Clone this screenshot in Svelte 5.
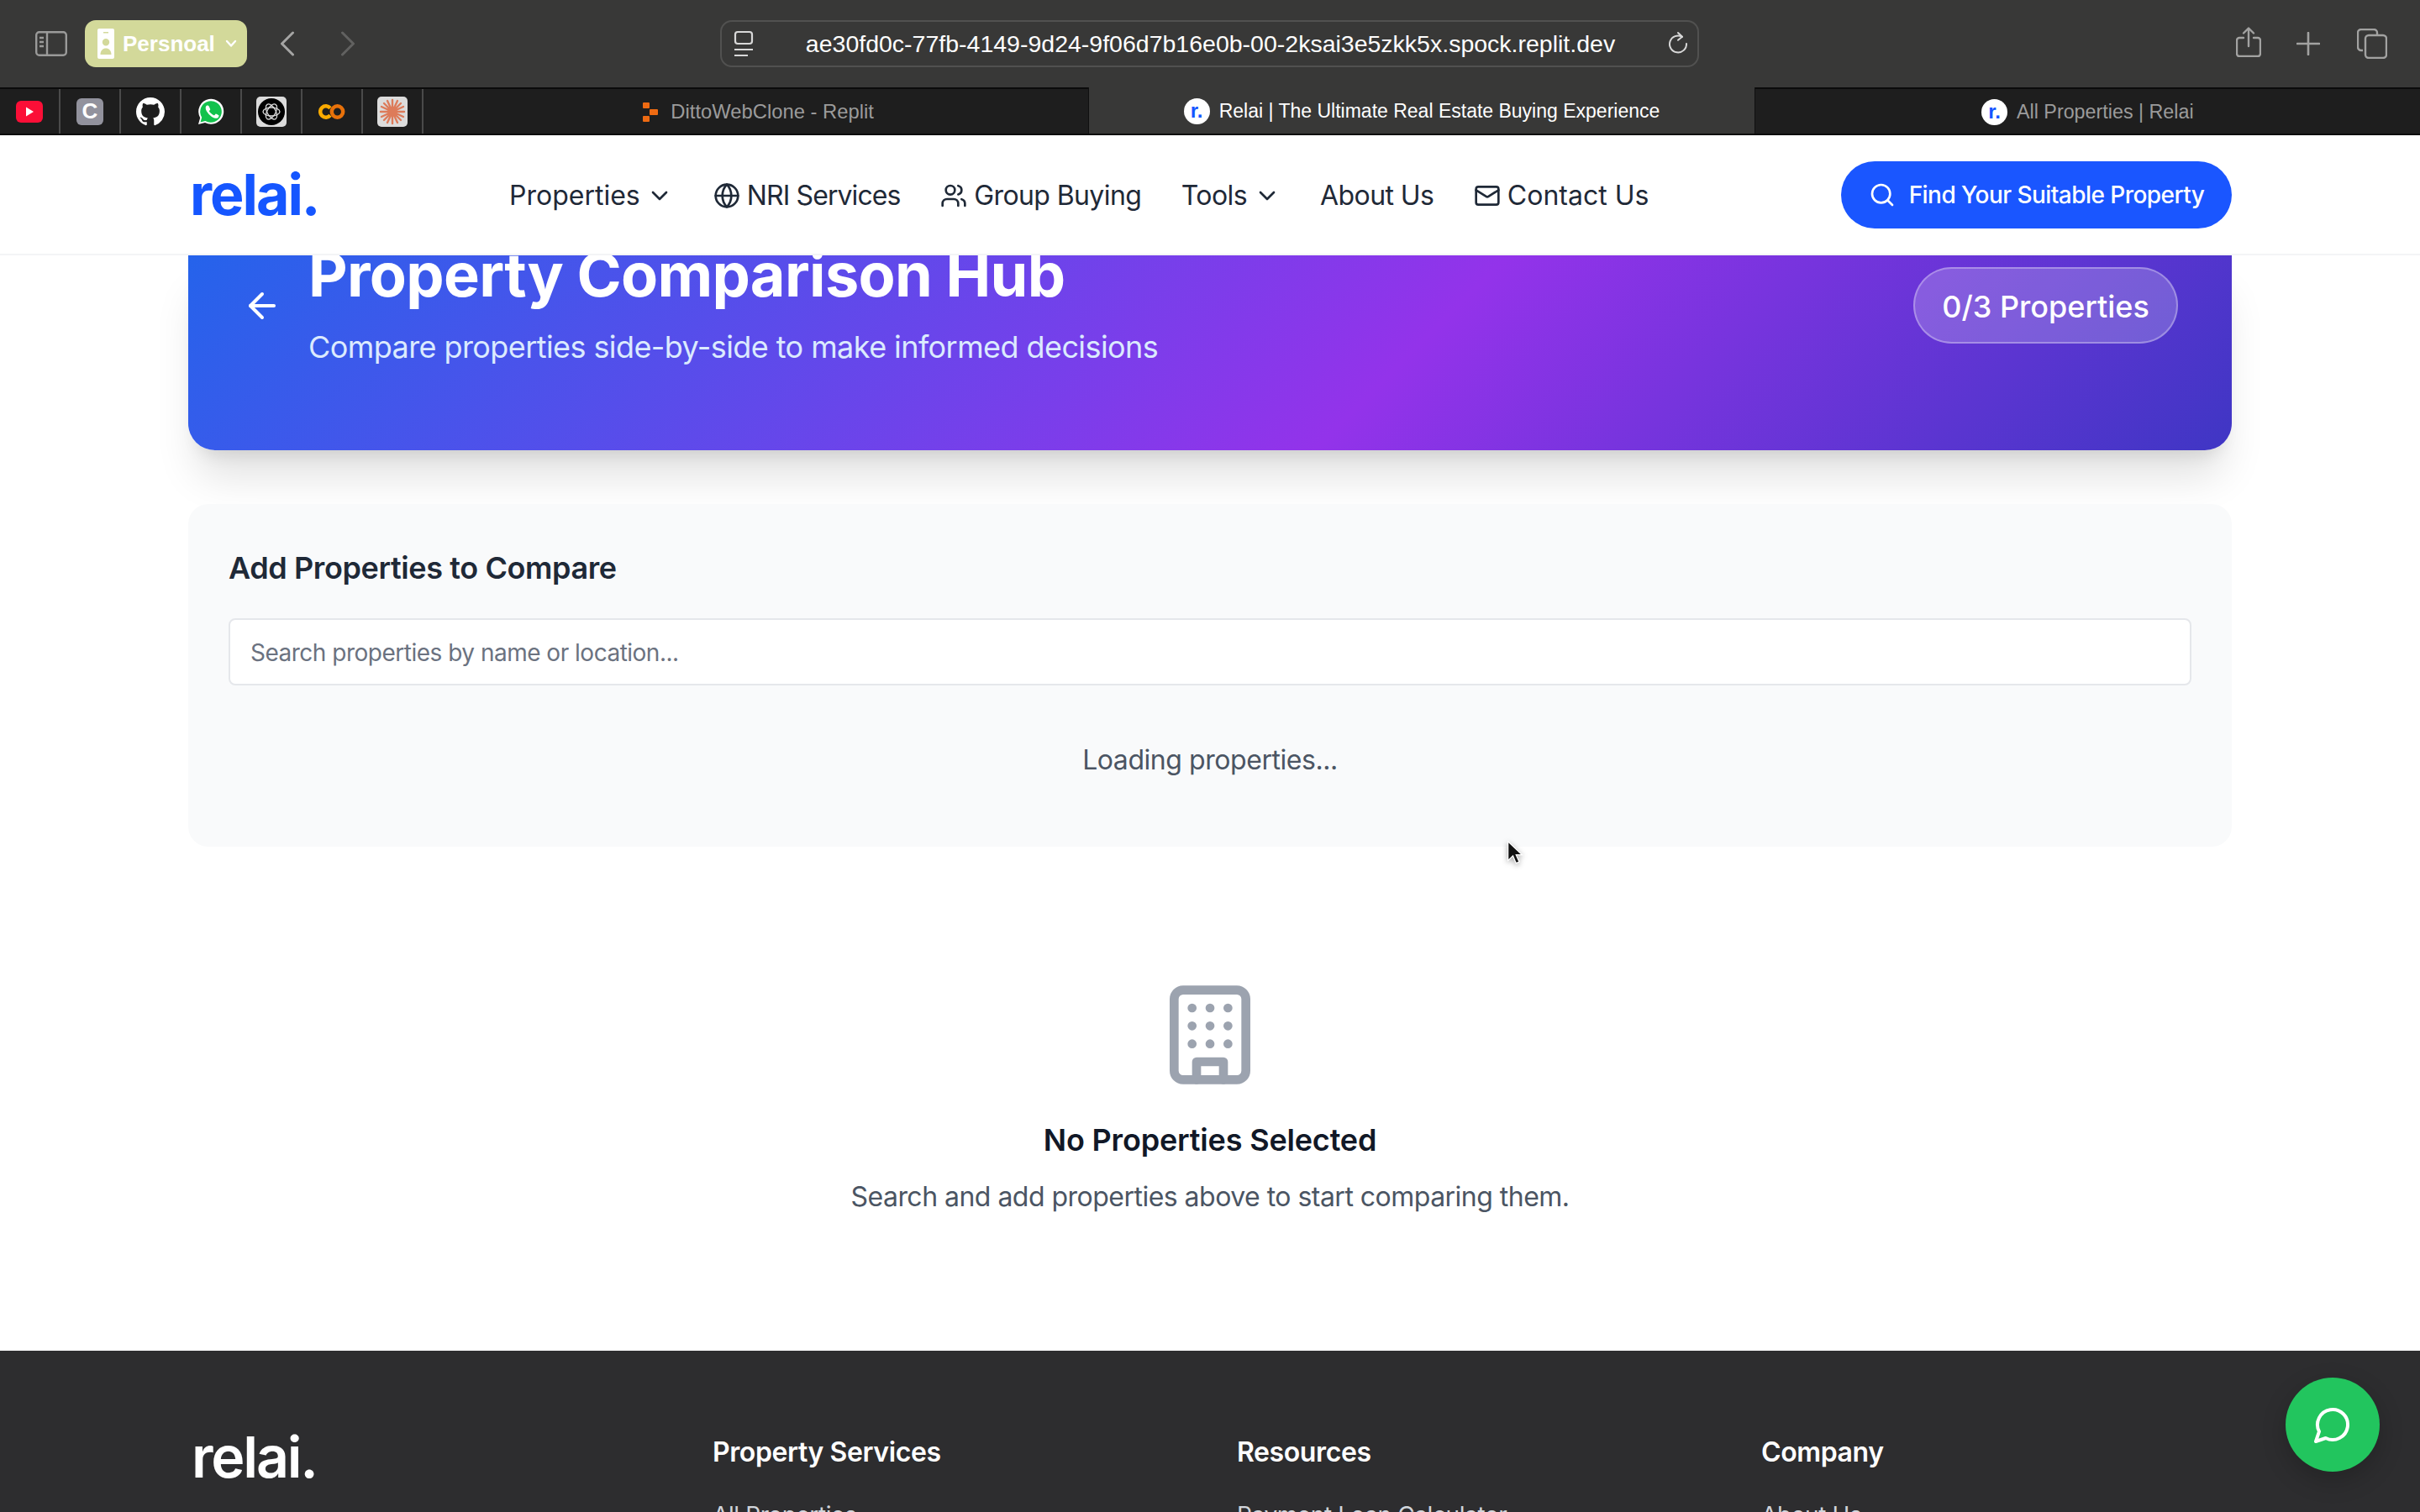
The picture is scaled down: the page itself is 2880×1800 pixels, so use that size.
<script>
  const dots = [6, 10, 14];
  const pins = [
    { id: 'yt' }, { id: 'c' }, { id: 'gh' }, { id: 'wa' }, { id: 'ai' }, { id: 'co' }, { id: 'cl' }
  ];
  const footerCols = [
    { title: 'Property Services', link: 'All Properties' },
    { title: 'Resources', link: 'Payment Loan Calculator' },
    { title: 'Company', link: 'About Us' }
  ];
</script>

<div class="screen">
  <header class="chrome">
    <div class="toolbar">
      <div class="left-tools">
        <svg class="sidebar-ic" viewBox="0 0 38 30" fill="none" stroke="#9a9a99" stroke-width="2.4">
          <rect x="1.2" y="1.2" width="35.6" height="27.6" rx="3.5" />
          <path d="M14 1.2v27.6M5 8h5M5 13h5M5 18h5" />
        </svg>
        <div class="profile">
          <svg class="badge-ic" viewBox="0 0 20 36">
            <path fill="#fff" fill-rule="evenodd" d="M2 0h16a2 2 0 0 1 2 2v32a2 2 0 0 1-2 2H2a2 2 0 0 1-2-2V2a2 2 0 0 1 2-2zM7 4v1.600h6V4zM10 12a4.200 4.200 0 1 0 0 8.400a4.200 4.200 0 0 0 0-8.400zM3.500 31h13c0-5-3-7.500-6.500-7.500s-6.500 2.500-6.500 7.500z" />
          </svg>
          <span class="profile-name">Persnoal</span>
          <svg class="profile-chev" viewBox="0 0 14 10" fill="none" stroke="#fff" stroke-width="2.400" stroke-linecap="round" stroke-linejoin="round"><path d="M2 2l5 5.500 5-5.500" /></svg>
        </div>
        <div class="history">
          <svg viewBox="0 0 18 30" fill="none" stroke="#a5a5a4" stroke-width="3" stroke-linecap="round" stroke-linejoin="round"><path d="M15.500 2L2.500 15l13 13" /></svg>
          <svg viewBox="0 0 18 30" fill="none" stroke="#616160" stroke-width="3" stroke-linecap="round" stroke-linejoin="round"><path d="M2.500 2l13 13-13 13" /></svg>
        </div>
      </div>
      <div class="url">
        <svg class="url-ic" viewBox="0 0 24 32" fill="none" stroke="#d8d8d8" stroke-width="2.200">
          <rect x="2" y="2" width="20" height="14" rx="3" />
          <path d="M1 23h22M1 30h16" />
        </svg>
        <span class="url-text">ae30fd0c-77fb-4149-9d24-9f06d7b16e0b-00-2ksai3e5zkk5x.spock.replit.dev</span>
        <svg class="reload" viewBox="0 0 26 30" fill="none" stroke="#d8d8d8" stroke-width="2" stroke-linecap="round" stroke-linejoin="round">
          <path d="M18 6.800A10 10 0 1 0 23 15" /><path d="M13 2l5 4.800-5 4" />
        </svg>
      </div>
      <div class="right-tools">
        <svg class="share" viewBox="0 0 30 36" fill="none" stroke="#a2a2a1" stroke-width="2.400" stroke-linecap="round" stroke-linejoin="round">
          <path d="M9 13H4a3 3 0 0 0-3 3v16a3 3 0 0 0 3 3h22a3 3 0 0 0 3-3V16a3 3 0 0 0-3-3h-5M15 23V2M9 7.500L15 1.500l6 6" />
        </svg>
        <svg class="plus" viewBox="0 0 28 28" fill="none" stroke="#a2a2a1" stroke-width="2.600" stroke-linecap="round"><path d="M14 1v26M1 14h26" /></svg>
        <svg class="copies" viewBox="0 0 36 36" fill="none" stroke="#a2a2a1" stroke-width="2.400">
          <path d="M7 26H5a4 4 0 0 1-4-4V5a4 4 0 0 1 4-4h15a4 4 0 0 1 4 4v2" />
          <rect x="10" y="8" width="25" height="27" rx="4" />
        </svg>
      </div>
    </div>
    <div class="tabbar">
      <div class="pins">
        {#each pins as p}
          <div class="pin">
            {#if p.id === 'yt'}
              <svg width="32" height="26" viewBox="0 0 32 26"><rect width="32" height="26" rx="6" fill="#fb0f37" /><path d="M12 7.500l9 5.500-9 5.500z" fill="#fff" /></svg>
            {:else if p.id === 'c'}
              <div class="pin-c">C</div>
            {:else if p.id === 'gh'}
              <svg width="34" height="34" viewBox="0 0 16 16"><path fill="#fff" d="M8 0C3.580 0 0 3.580 0 8c0 3.540 2.290 6.530 5.470 7.590.4.070.55-.17.55-.38 0-.19-.01-.82-.01-1.490-2.010.37-2.530-.49-2.690-.94-.09-.23-.48-.94-.82-1.130-.28-.15-.68-.52-.01-.53.63-.01 1.080.58 1.230.82.720 1.210 1.870.870 2.330.660.070-.520.280-.870.510-1.070-1.780-.2-3.640-.89-3.640-3.950 0-.870.310-1.590.820-2.150-.08-.2-.36-1.020.080-2.120 0 0 .670-.210 2.200.820.640-.180 1.320-.270 2-.270s1.360.090 2 .270c1.530-1.040 2.200-.820 2.200-.820.440 1.100.160 1.920.080 2.120.510.560.820 1.270.820 2.150 0 3.070-1.870 3.750-3.650 3.950.290.250.540.730.540 1.480 0 1.070-.010 1.930-.010 2.200 0 .210.150.460.550.380A8.010 8.010 0 0 0 16 8c0-4.420-3.580-8-8-8z" /></svg>
            {:else if p.id === 'wa'}
              <svg width="32" height="32" viewBox="0 0 32 32"><path fill="#fff" d="M1 31l2.200-7.800A15 15 0 1 1 9 28.900z" /><path fill="#12c24c" d="M3.500 28.500l1.700-5.700a12.800 12.800 0 1 1 4.200 4.100z" /><path fill="#fff" d="M11.500 8.500c-.6 0-1.800.9-1.800 3 0 2.400 1.700 4.800 2 5.100.3.400 3.400 5.300 8.300 6.900 2.500.8 4.300.2 5-1 .5-.9.600-2 .4-2.300-.2-.3-3-1.600-3.500-1.800-.5-.1-1.200 1.500-1.800 1.900-1.500-.2-5.100-2.700-6.200-5.100.3-.5 1.500-1.500 1.300-2.200l-1.400-3.300c-.3-.8-1.400-1.200-2.300-1.200z" /></svg>
            {:else if p.id === 'ai'}
              <div class="pin-tile">
                <svg width="32" height="32" viewBox="0 0 32 32"><circle cx="16" cy="16" r="16" fill="#000" /><g fill="none" stroke="#d9d9d9" stroke-width="1.300"><ellipse cx="16" cy="16" rx="10" ry="5" /><ellipse cx="16" cy="16" rx="10" ry="5" transform="rotate(60 16 16)" /><ellipse cx="16" cy="16" rx="10" ry="5" transform="rotate(120 16 16)" /></g></svg>
              </div>
            {:else if p.id === 'co'}
              <svg width="32" height="18" viewBox="0 0 32 18" fill="none" stroke-width="4.500"><path stroke="#fbab00" d="M14 4.700A6.700 6.700 0 1 0 14 13.300" /><circle cx="22.500" cy="9" r="6.700" stroke="#e8710a" /></svg>
            {:else}
              <div class="pin-tile">
                <svg width="32" height="32" viewBox="0 0 32 32" stroke="#dd7b5a" stroke-width="2.400" stroke-linecap="round"><path d="M16 2v28M2 16h28M6 6l20 20M26 6L6 26M10 3l12 26M22 3L10 29M3 10l26 12M29 10L3 22" /></svg>
              </div>
            {/if}
          </div>
        {/each}
      </div>
      <div class="tab replit">
        <svg class="replit-ic" width="18" height="23" viewBox="0 0 18 23" fill="#ee6a12"><rect x="0" y="0" width="8" height="7" rx="1" /><rect x="8" y="8" width="10" height="7" rx="1" /><rect x="0" y="16" width="8" height="7" rx="1" /></svg>
        <span>DittoWebClone - Replit</span>
      </div>
      <div class="tab active">
        <span class="fav">r.</span>
        <span>Relai | The Ultimate Real Estate Buying Experience</span>
      </div>
      <div class="tab">
        <span class="fav">r.</span>
        <span>All Properties | Relai</span>
      </div>
    </div>
  </header>

  <nav class="site-nav">
    <div class="logo">relai.</div>
    <div class="links">
      <span class="link wide">Properties
        <svg class="chev" viewBox="0 0 24 24"><path d="m6 9 6 6 6-6" /></svg>
      </span>
      <span class="link icon-left tight">
        <svg class="ic" viewBox="0 0 24 24"><circle cx="12" cy="12" r="10" /><path d="M12 2a14.500 14.500 0 0 0 0 20 14.500 14.500 0 0 0 0-20" /><path d="M2 12h20" /></svg>
        NRI Services
      </span>
      <span class="link icon-left">
        <svg class="ic" viewBox="0 0 24 24"><path d="M16 21v-2a4 4 0 0 0-4-4H6a4 4 0 0 0-4 4v2" /><circle cx="9" cy="7" r="4" /><path d="M22 21v-2a4 4 0 0 0-3-3.870" /><path d="M16 3.130a4 4 0 0 1 0 7.750" /></svg>
        Group Buying
      </span>
      <span class="link">Tools
        <svg class="chev" viewBox="0 0 24 24"><path d="m6 9 6 6 6-6" /></svg>
      </span>
      <span class="link">About Us</span>
      <span class="link icon-left wide">
        <svg class="ic" viewBox="0 0 24 24"><rect width="20" height="16" x="2" y="4" rx="2" /><path d="m22 7-8.970 5.700a1.940 1.940 0 0 1-2.060 0L2 7" /></svg>
        Contact Us
      </span>
    </div>
    <div class="cta">
      <svg class="ic-cta" viewBox="0 0 24 24"><circle cx="11" cy="11" r="8" /><path d="m21 21-4.300-4.300" /></svg>
      Find Your Suitable Property
    </div>
  </nav>

  <main class="page">
    <section class="hero">
      <div class="hero-main">
        <svg class="back" viewBox="0 0 24 24"><path d="m12 19-7-7 7-7" /><path d="M19 12H5" /></svg>
        <div class="hero-copy">
          <h1>Property Comparison Hub</h1>
          <p>Compare properties side-by-side to make informed decisions</p>
        </div>
      </div>
      <div class="count">0/3 Properties</div>
    </section>

    <section class="add-card">
      <h2>Add Properties to Compare</h2>
      <div class="search">Search properties by name or location...</div>
      <div class="loading">Loading properties...</div>
    </section>

    <section class="empty">
      <svg class="building" viewBox="0 0 24 24">
        <rect x="4" y="2" width="16" height="20" rx="2" ry="2" />
        <path d="M9 22v-4h6v4" />
        {#each dots as y}
          <path d="M8 {y}h.01M12 {y}h.01M16 {y}h.01" />
        {/each}
      </svg>
      <h3>No Properties Selected</h3>
      <p>Search and add properties above to start comparing them.</p>
    </section>
  </main>

  <footer class="footer">
    <div class="foot-logo">relai.</div>
    {#each footerCols as col}
      <div class="foot-col">
        <h4>{col.title}</h4>
        <span>{col.link}</span>
      </div>
    {/each}
  </footer>

  <div class="chat">
    <svg viewBox="0 0 24 24"><path d="M7.900 20A9 9 0 1 0 4 16.100L2 22Z" /></svg>
  </div>

  <svg class="cursor" viewBox="0 0 24 36">
    <path d="M2 1v27l7-6.500 4.500 10.500 4.500-2-4.500-10H22z" fill="#111" stroke="#fff" stroke-width="1.500" />
  </svg>
</div>

<style>
  :global(body) {
    margin: 0;
    background: #fff;
  }
  .screen {
    position: relative;
    width: 2880px;
    height: 1800px;
    overflow: hidden;
    display: flex;
    flex-direction: column;
    font-family: Inter, "Noto Sans", sans-serif;
    color: #111827;
    background: #fff;
  }
  .chrome {
    flex: none;
    font-family: "Liberation Sans", Arial, sans-serif;
    background: #383837;
  }
  .toolbar {
    height: 104px;
    position: relative;
    display: flex;
    align-items: center;
    justify-content: space-between;
    padding: 0 39px 0 42px;
    box-sizing: border-box;
  }
  .left-tools {
    display: flex;
    align-items: center;
  }
  .sidebar-ic {
    width: 38px;
    height: 30px;
    margin-right: 21px;
  }
  .profile {
    width: 193px;
    height: 56px;
    box-sizing: border-box;
    padding-left: 15px;
    border-radius: 13px;
    background: #d3d99a;
    display: flex;
    align-items: center;
  }
  .badge-ic {
    width: 20px;
    height: 36px;
    margin-right: 10px;
  }
  .profile-name {
    color: #fff;
    font-size: 26px;
    font-weight: 700;
    width: 109px;
  }
  .profile-chev {
    width: 14px;
    height: 10px;
    margin-left: 13px;
  }
  .history {
    display: flex;
    gap: 54px;
    margin-left: 39px;
  }
  .history svg {
    width: 18px;
    height: 30px;
  }
  .url {
    position: absolute;
    left: 857px;
    top: 24px;
    width: 1165px;
    height: 56px;
    box-sizing: border-box;
    border: 2px solid #515150;
    border-radius: 14px;
    display: flex;
    align-items: center;
    padding: 0 10px 0 14px;
  }
  .url-ic {
    width: 24px;
    height: 32px;
  }
  .url-text {
    flex: 1;
    text-align: center;
    color: #fff;
    font-size: 28.500px;
    white-space: nowrap;
  }
  .reload {
    width: 26px;
    height: 30px;
  }
  .right-tools {
    display: flex;
    align-items: center;
    gap: 42px;
  }
  .share {
    width: 30px;
    height: 36px;
    margin-top: -4px;
  }
  .plus {
    width: 28px;
    height: 28px;
  }
  .copies {
    width: 36px;
    height: 36px;
    margin-left: 2px;
  }
  .tabbar {
    height: 57px;
    display: flex;
    box-sizing: border-box;
    border-top: 2px solid #0b0b0b;
    border-bottom: 2px solid #0b0b0b;
    background: #1e1e1e;
  }
  .pins {
    display: flex;
    flex: none;
    width: 504px;
  }
  .pin {
    width: 72px;
    box-sizing: border-box;
    border-right: 2px solid #4a4a4a;
    display: flex;
    align-items: center;
    justify-content: center;
  }
  .pin-c {
    width: 32px;
    height: 32px;
    border-radius: 6px;
    background: #92929d;
    color: #fff;
    font-size: 26px;
    font-weight: 700;
    display: flex;
    align-items: center;
    justify-content: center;
  }
  .pin-tile {
    width: 36px;
    height: 36px;
    border-radius: 5px;
    background: #dcdcdc;
    display: flex;
    align-items: center;
    justify-content: center;
  }
  .tab {
    flex: 1;
    display: flex;
    align-items: center;
    justify-content: center;
    gap: 11px;
    color: #9b9b9b;
    font-size: 23.300px;
    line-height: 30px;
    padding-top: 1px;
    white-space: nowrap;
  }
  .tab.replit {
    gap: 15px;
    font-size: 23.800px;
  }
  .replit-ic {
    margin-left: 6px;
  }
  .tab.active {
    background: #383837;
    color: #fff;
    font-size: 23px;
    margin-top: -2px;
    border-left: 1px solid #101010;
    border-right: 1px solid #101010;
  }
  .fav {
    width: 31px;
    height: 31px;
    border-radius: 50%;
    background: #fff;
    color: #1556ff;
    font-size: 24px;
    font-weight: 700;
    display: flex;
    align-items: center;
    justify-content: center;
    line-height: 1;
  }
  .site-nav {
    flex: none;
    height: 143px;
    box-sizing: border-box;
    border-bottom: 2px solid #f3f4f6;
    background: #fff;
    padding: 0 224px;
    display: flex;
    align-items: center;
    position: relative;
    z-index: 2;
  }
  .logo {
    font-size: 68px;
    font-weight: 700;
    letter-spacing: -2px;
    color: #1556ff;
    line-height: 1;
    width: 380px;
    padding-left: 2px;
    margin-top: -2px;
  }
  .links {
    display: flex;
    align-items: center;
    gap: 47.600px;
    flex: 1;
    font-size: 32px;
    color: #1f2937;
    letter-spacing: -0.600px;
    padding-top: 2px;
  }
  .link {
    display: inline-flex;
    align-items: center;
    gap: 7.500px;
    white-space: nowrap;
  }
  .link.wide {
    letter-spacing: 0;
  }
  .link.tight {
    letter-spacing: -0.900px;
  }
  .link.icon-left {
    gap: 8px;
  }
  .chev,
  .ic,
  .ic-cta,
  .back,
  .building,
  .chat svg {
    fill: none;
    stroke: currentColor;
    stroke-width: 2;
    stroke-linecap: round;
    stroke-linejoin: round;
  }
  .chev {
    width: 32px;
    height: 32px;
  }
  .ic {
    width: 32px;
    height: 32px;
  }
  .cta {
    flex: none;
    width: 465px;
    height: 80px;
    box-sizing: border-box;
    border-radius: 40px;
    background: #1a56ff;
    color: #fff;
    font-size: 28px;
    font-weight: 500;
    letter-spacing: -0.550px;
    display: flex;
    align-items: center;
    justify-content: center;
    gap: 16px;
    white-space: nowrap;
  }
  .ic-cta {
    width: 32px;
    height: 32px;
  }
  .page {
    flex: none;
    height: 1304px;
    padding: 0 224px;
    box-sizing: border-box;
    display: flex;
    flex-direction: column;
  }
  .hero {
    flex: none;
    height: 232px;
    box-sizing: border-box;
    border-radius: 0 0 32px 32px;
    background: linear-gradient(135deg, #2563eb, #9333ea 59%, #3f36c4);
    box-shadow: 0 40px 50px -10px rgba(0, 0, 0, 0.12), 0 16px 20px -12px rgba(0, 0, 0, 0.1);
    padding: 0 64px 95px 64px;
    display: flex;
    align-items: flex-end;
    justify-content: space-between;
    color: #fff;
    overflow: hidden;
  }
  .hero-main {
    display: flex;
    align-items: center;
    gap: 31px;
  }
  .back {
    width: 48px;
    height: 48px;
    flex: none;
  }
  h1 {
    margin: 0;
    font-size: 72px;
    font-weight: 700;
    line-height: 80px;
    white-space: nowrap;
    letter-spacing: -0.700px;
  }
  .hero-copy p {
    margin: 18px 0 0;
    font-size: 36px;
    line-height: 56px;
    letter-spacing: -0.580px;
    color: #dbeafe;
    white-space: nowrap;
  }
  .count {
    flex: none;
    width: 315px;
    height: 91px;
    margin-bottom: 32px;
    padding-top: 2px;
    box-sizing: border-box;
    border: 2px solid rgba(255, 255, 255, 0.3);
    border-radius: 46px;
    background: rgba(255, 255, 255, 0.2);
    font-size: 36px;
    font-weight: 500;
    display: flex;
    align-items: center;
    justify-content: center;
    white-space: nowrap;
  }
  .add-card {
    margin-top: 64px;
    height: 408px;
    box-sizing: border-box;
    padding: 48px;
    border-radius: 24px;
    background: #f9fafb;
  }
  h2 {
    margin: 0;
    font-size: 36px;
    line-height: 56px;
    font-weight: 600;
    letter-spacing: -0.400px;
    color: #1f2937;
  }
  .search {
    margin-top: 32px;
    height: 80px;
    box-sizing: border-box;
    border: 2px solid #e5e7eb;
    border-radius: 8px;
    background: #fff;
    padding: 2px 24px 0;
    display: flex;
    align-items: center;
    font-size: 28px;
    letter-spacing: -0.500px;
    color: #6b7280;
  }
  .loading {
    margin-top: 65px;
    text-align: center;
    font-size: 32px;
    line-height: 48px;
    letter-spacing: -0.440px;
    color: #4b5563;
  }
  .empty {
    margin-top: 160px;
    display: flex;
    flex-direction: column;
    align-items: center;
  }
  .building {
    width: 128px;
    height: 128px;
    color: #9ca3af;
  }
  h3 {
    margin: 33px 0 0;
    font-size: 36px;
    line-height: 56px;
    font-weight: 600;
    letter-spacing: -0.180px;
    color: #111827;
  }
  .empty p {
    margin: 16px 0 0;
    font-size: 32px;
    line-height: 48px;
    letter-spacing: -0.520px;
    color: #4b5563;
  }
  .footer {
    flex: none;
    height: 192px;
    box-sizing: border-box;
    padding: 96px 224px 0;
    background: #2d2d2f;
    display: grid;
    grid-template-columns: repeat(4, 560px);
    column-gap: 64px;
    color: #fff;
  }
  .foot-logo {
    font-size: 68px;
    font-weight: 600;
    letter-spacing: -2.200px;
    line-height: 1;
    padding-left: 4px;
    margin-top: -4px;
  }
  h4 {
    margin: 1px 0 31px;
    font-size: 32px;
    font-weight: 600;
    line-height: 48px;
    letter-spacing: -0.400px;
  }
  .foot-col span {
    font-size: 28px;
    line-height: 40px;
    letter-spacing: -0.400px;
    color: #d1d5db;
    white-space: nowrap;
  }
  .chat {
    position: absolute;
    left: 2720px;
    top: 1640px;
    width: 112px;
    height: 112px;
    border-radius: 50%;
    background: #22c55e;
    color: #fff;
    display: flex;
    align-items: center;
    justify-content: center;
    box-shadow: 0 10px 30px rgba(0, 0, 0, 0.2);
  }
  .chat svg {
    width: 48px;
    height: 48px;
  }
  .cursor {
    position: absolute;
    left: 1793px;
    top: 1001px;
    width: 20px;
    height: 30px;
    filter: drop-shadow(0 2px 3px rgba(0, 0, 0, 0.35));
  }
</style>
